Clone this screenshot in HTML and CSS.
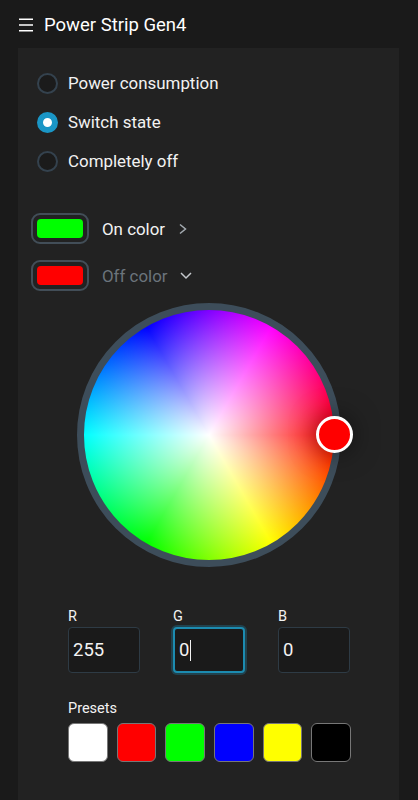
FILE: index.html
```html
<!DOCTYPE html>
<html lang="en">
<head>
  <meta charset="UTF-8">
  <meta name="viewport" content="width=device-width, initial-scale=1.0">
  <title>Power Strip Gen4</title>
  <link rel="stylesheet" href="styles.css">
</head>
<body>
  <header class="topbar">
    <svg class="menu-icon" width="14" height="14" viewBox="0 0 14 14">
      <path d="M0 1.2H14M0 7H14M0 12.8H14" stroke="#fff" stroke-width="1.4" fill="none"/>
    </svg>
    <h1>Power Strip Gen4</h1>
  </header>

  <main class="panel">
    <div class="radio-list">
      <div class="radio-row"><span class="radio"></span>Power consumption</div>
      <div class="radio-row"><span class="radio checked"></span>Switch state</div>
      <div class="radio-row"><span class="radio"></span>Completely off</div>
    </div>

    <div class="color-row">
      <span class="swatch"><span class="swatch-fill green"></span></span>
      <span class="color-label">On color</span>
      <svg class="chevron" width="10" height="12" viewBox="0 0 10 12">
        <path d="M2 1.5L7.5 6L2 10.5" stroke="#a4abb1" stroke-width="1.5" fill="none"/>
      </svg>
    </div>
    <div class="color-row">
      <span class="swatch"><span class="swatch-fill red"></span></span>
      <span class="color-label muted">Off color</span>
      <svg class="chevron down" width="12" height="10" viewBox="0 0 12 10">
        <path d="M1 2L6 7L11 2" stroke="#c4c8cc" stroke-width="1.5" fill="none"/>
      </svg>
    </div>

    <div class="wheel">
      <div class="wheel-disc"></div>
      <div class="wheel-handle"></div>
    </div>

    <div class="rgb-grid">
      <div class="rgb-field">
        <label>R</label>
        <div class="rgb-input">255</div>
      </div>
      <div class="rgb-field">
        <label>G</label>
        <div class="rgb-input focused">0<span class="caret"></span></div>
      </div>
      <div class="rgb-field">
        <label>B</label>
        <div class="rgb-input">0</div>
      </div>
    </div>

    <div class="presets">
      <div class="presets-title">Presets</div>
      <div class="preset-list">
        <span class="preset white"></span>
        <span class="preset red"></span>
        <span class="preset green"></span>
        <span class="preset blue"></span>
        <span class="preset yellow"></span>
        <span class="preset black"></span>
      </div>
    </div>
  </main>
</body>
</html>
```

FILE: styles.css
```css
html, body {
  margin: 0;
  height: 800px;
  overflow: hidden;
}
body {
  background-color: #1a1a1a;
  color: #f2f2f2;
  font-family: Roboto, sans-serif;
  font-size: 16.9px;
}
.topbar {
  box-sizing: border-box;
  display: flex;
  align-items: center;
  gap: 11px;
  height: 48px;
  padding: 2px 0 0 19px;
}
.topbar h1 {
  margin: 0;
  font-size: 18.5px;
  font-weight: 400;
  color: #fff;
}
.menu-icon {
  flex: none;
}
.panel {
  box-sizing: border-box;
  height: 752px;
  margin: 0 19px 0 18px;
  padding: 24px 0 0 13px;
  background-color: #222;
}
.radio-list {
  display: flex;
  flex-direction: column;
  gap: 17px;
  padding-left: 6px;
}
.radio-row {
  display: flex;
  align-items: center;
  gap: 10px;
  height: 22px;
}
.radio {
  box-sizing: border-box;
  width: 21px;
  height: 21px;
  border: 2px solid #34424e;
  border-radius: 50%;
  background-color: #1b1b1b;
}
.radio.checked {
  border: 6px solid #1a96c6;
  background-color: #fff;
}
.color-row {
  display: flex;
  align-items: center;
  height: 31px;
  margin-top: 16px;
}
.radio-list + .color-row {
  margin-top: 41px;
}
.swatch {
  box-sizing: border-box;
  display: flex;
  width: 58px;
  height: 31px;
  padding: 4px;
  border: 2px solid #424e58;
  border-radius: 9px;
}
.swatch-fill {
  flex: 1;
  border-radius: 4px;
}
.swatch-fill.green {
  background-color: #0f0;
}
.swatch-fill.red {
  background-color: #f00;
}
.color-label {
  margin: 0 13px;
}
.color-label.muted {
  color: #6b747c;
}
.chevron.down {
  margin-left: -1px;
}
.wheel {
  position: relative;
  width: 264px;
  height: 264px;
  margin: 12px 0 0 46px;
}
.wheel-disc {
  box-sizing: border-box;
  width: 100%;
  height: 100%;
  border: 7px solid #3d4d5a;
  border-radius: 50%;
  background:
    radial-gradient(circle closest-side, #fff, rgba(255, 255, 255, 0)),
    conic-gradient(from 90deg, #f00, #ff0, #0f0, #0ff, #00f, #f0f, #f00);
  background-origin: padding-box;
}
.wheel-handle {
  position: absolute;
  top: 113px;
  left: 239px;
  box-sizing: border-box;
  width: 37px;
  height: 37px;
  border: 3.5px solid #fff;
  border-radius: 50%;
  background-color: #f00;
  box-shadow: 0 0 26px rgba(0, 0, 0, 0.5);
}
.rgb-grid {
  display: grid;
  grid-template-columns: repeat(3, 72px);
  justify-content: space-between;
  width: 282px;
  margin: 40px 0 0 37px;
}
.rgb-field label {
  display: block;
  height: 20px;
  font-size: 14.5px;
  line-height: 19px;
}
.rgb-input {
  box-sizing: border-box;
  display: flex;
  align-items: center;
  height: 46px;
  padding-left: 4px;
  border: 1px solid #2e3b45;
  border-radius: 4px;
  background-color: #1a1a1a;
  font-size: 18.5px;
}
.rgb-input.focused {
  padding-left: 4px;
  border: 2px solid #1c8bb0;
  box-shadow: 0 0 0 2px rgba(31, 143, 181, 0.3);
}
.caret {
  width: 1px;
  height: 21px;
  margin-left: 1px;
  background-color: #f2f2f2;
}
.presets {
  width: 283px;
  margin: 26px 0 0 37px;
}
.presets-title {
  height: 24px;
  font-size: 14.5px;
  line-height: 19px;
}
.preset-list {
  display: flex;
  justify-content: space-between;
}
.preset {
  box-sizing: border-box;
  width: 39.5px;
  height: 39px;
  border: 1px solid #777;
  border-radius: 6px;
}
.preset.white { background-color: #fff; }
.preset.red { background-color: #f00; }
.preset.green { background-color: #0f0; }
.preset.blue { background-color: #00f; }
.preset.yellow { background-color: #ff0; }
.preset.black { background-color: #000; }
```
